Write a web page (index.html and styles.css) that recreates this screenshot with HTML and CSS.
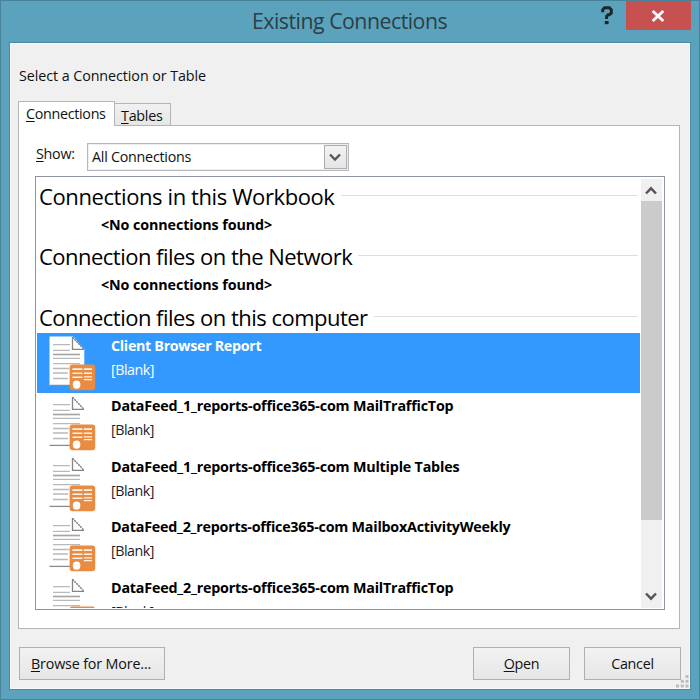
FILE: index.html
```
<!DOCTYPE html>
<html lang="en">
<head>
<meta charset="utf-8">
<title>Existing Connections</title>
<link rel="stylesheet" href="styles.css">
</head>
<body>
<svg class="defs" width="0" height="0" aria-hidden="true">
  <symbol id="feed" viewBox="0 0 48 56">
    <g fill="none" stroke="#b9b9b9" stroke-width="1.3">
      <path d="M4 8.7h17M4 14.3h17M4 22.3h27M4 27.7h27M4 32.5h16M4 37h15M4 42.5h15"/>
      <path d="M4 18.5h27" stroke="#a6a6a6" stroke-width="1.7"/>
      <path d="M.5 49.4h21" stroke="#8b8b8b"/>
    </g>
    <path d="M23.5 1.2V13.3H35" fill="#fff" stroke="#858585" stroke-width="1.3"/>
    <path d="M23.5 1.2L35 13.3" fill="none" stroke="#777" stroke-width="1.3" stroke-dasharray="2 .8"/>
    <rect x="20.6" y="28.6" width="25.6" height="25.6" rx="3" fill="#e98b41"/>
    <g fill="#fff3e7">
      <path d="M23.4 32.2h10v1.9h-10zM34.8 32.2h8.2v1.9h-8.2zM23.4 36.4h10v1.7h-10zM34.8 36.4h8.2v1.7h-8.2zM23.4 40.5h10v1.4h-10zM34.8 40.3h8.2v1.2h-8.2zM34.8 43h8.2v1.3h-8.2z"/>
      <ellipse cx="27.6" cy="48.6" rx="3.8" ry="4.2" fill="#fff"/>
    </g>
  </symbol>
</svg>
<div class="window">
  <header class="titlebar">
    <h1 class="title"><span>Existing Connections</span></h1>
    <svg class="help" width="12" height="19" viewBox="0 0 12 19"><path d="M1.7 6.2V3.8L3.6 1.8H8.4L10.3 3.8V7L8.3 8.8H7L5.6 10.3V13" fill="none" stroke="#242424" stroke-width="3"/><path d="M3.8 15h3.8v3.2H3.8z" fill="#242424"/></svg>
    <div class="close"><svg width="14" height="12" viewBox="0 0 14 12"><path d="M1.7 1L12.3 11M12.3 1L1.7 11" stroke="#fff" stroke-width="2.8"/></svg></div>
  </header>
  <main class="client">
    <div class="prompt">Select a Connection or Table</div>
    <div class="tabs">
      <div class="tab active"><span><u>C</u>onnections</span></div>
      <div class="tab"><span><u>T</u>ables</span></div>
    </div>
    <section class="panel">
      <div class="filter">
        <label><u>S</u>how:</label>
        <div class="select"><span>All Connections</span><div class="drop"><svg width="12" height="9" viewBox="0 0 12 9"><path d="M1 1.5L6 6.5L11 1.5" fill="none" stroke="#555" stroke-width="2.3"/></svg></div></div>
      </div>
      <div class="list">
        <div class="content">
          <div class="group first"><span>Connections in this Workbook</span></div>
          <div class="empty"><span>&lt;No connections found&gt;</span></div>
          <div class="group"><span>Connection files on the Network</span></div>
          <div class="empty"><span>&lt;No connections found&gt;</span></div>
          <div class="group"><span>Connection files on this computer</span></div>
          <div class="item selected"><svg class="icon" viewBox="0 0 48 56"><path d="M.5.5H24L35.3 13V49.5H.5z" fill="#fff"/><use href="#feed"/></svg><div><b>Client Browser Report</b><p>[Blank]</p></div></div>
          <div class="item"><svg class="icon"><use href="#feed"/></svg><div><b>DataFeed_1_reports-office365-com MailTrafficTop</b><p>[Blank]</p></div></div>
          <div class="item"><svg class="icon"><use href="#feed"/></svg><div><b>DataFeed_1_reports-office365-com Multiple Tables</b><p>[Blank]</p></div></div>
          <div class="item"><svg class="icon"><use href="#feed"/></svg><div><b class="long">DataFeed_2_reports-office365-com MailboxActivityWeekly</b><p>[Blank]</p></div></div>
          <div class="item"><svg class="icon"><use href="#feed"/></svg><div><b>DataFeed_2_reports-office365-com MailTrafficTop</b><p>[Blank]</p></div></div>
        </div>
        <div class="scrollbar">
          <div class="arrow"><svg width="12" height="9" viewBox="0 0 12 9"><path d="M1 7.5L6 2.3L11 7.5" fill="none" stroke="#555" stroke-width="2.4"/></svg></div>
          <div class="thumb"></div>
          <div class="arrow down"><svg width="12" height="9" viewBox="0 0 12 9"><path d="M1 1.5L6 6.7L11 1.5" fill="none" stroke="#555" stroke-width="2.4"/></svg></div>
        </div>
      </div>
    </section>
    <footer class="actions">
      <div class="button browse"><span><u>B</u>rowse for More...</span></div>
      <div class="button"><span><u>O</u>pen</span></div>
      <div class="button"><span>Cancel</span></div>
    </footer>
    <svg class="grip" width="13" height="13" viewBox="0 0 13 13"><path d="M9.5 0h3v3h-3zM9.5 4.7h3v3h-3zM9.5 9.4h3v3h-3zM4.8 4.7h3v3h-3zM4.8 9.4h3v3h-3zM0 9.4h3v3h-3z" fill="#bcbcbc"/></svg>
  </main>
</div>
</body>
</html>
```

FILE: styles.css
```
* { box-sizing: border-box; }
body { margin: 0; font: 14.3px/20px "Open Sans", "Noto Sans", sans-serif; letter-spacing: -0.25px; color: #111; }
h1, p { margin: 0; font-weight: 400; }
span, b, label { white-space: nowrap; }
u { text-decoration-thickness: 1px; text-underline-offset: 2px; }
.defs { position: absolute; }
.window { width: 700px; height: 700px; background: #5ba3bc; border: 1px solid #47849a; padding: 0 8px 9px 8px; display: flex; flex-direction: column; }
.titlebar { height: 41px; flex: none; display: flex; align-items: flex-start; }
.title { flex: 1; padding-left: 243px; font-size: 21.3px; line-height: 40px; letter-spacing: -0.5px; color: #2c3e45; }
.help { margin: 5px 13px 0 0; }
.close { width: 65px; height: 29px; background: #c75050; display: flex; align-items: center; justify-content: center; }
.close svg { margin-right: 2px; }
.client { flex: 1; min-height: 0; border: 1px solid #4b8ca4; background: #f0f0f0; box-shadow: inset 0 0 0 1px #fafafa; padding: 22px 10px 0 8px; display: flex; flex-direction: column; position: relative; }
.prompt { height: 36px; padding-left: 1px; line-height: 22px; letter-spacing: -0.07px; }
.tabs { height: 24px; display: flex; align-items: flex-end; }
.tab { width: 56px; height: 22px; border: 1px solid #b5b5b5; border-left: 0; border-bottom: 0; background: linear-gradient(#f1f1f1, #e6e6e6); padding: 2px 0 0 6px; }
.tab.active { width: 97px; height: 25px; margin-bottom: -1px; padding: 2px 0 0 7px; border-left: 1px solid #b5b5b5; background: #fff; position: relative; z-index: 1; }
.tab.active span { letter-spacing: -0.3px; }
.panel { height: 504px; border: 1px solid #b5b5b5; background: #fff; padding: 17px 14px 17px 16px; }
.filter { display: flex; height: 33px; padding-left: 1px; }
.filter label { width: 51px; line-height: 22px; }
.select { width: 262px; height: 28px; border: 1px solid #b4b7bd; box-shadow: inset 0 0 0 1px #eee; display: flex; align-items: center; justify-content: space-between; padding: 0 1px 0 4px; }
.drop { width: 23px; height: 24px; border: 1px solid #adadad; background: linear-gradient(#f3f3f3, #e5e5e5); display: flex; align-items: center; justify-content: center; }
.drop svg { margin-right: 1px; }
.list { height: 434px; border: 1px solid #8f96a2; display: flex; padding: 1px 2px 1px 1px; }
.content { width: 603px; flex: none; height: 430px; overflow: hidden; color: #000; }
.group { height: 35.5px; display: flex; align-items: center; font-size: 22px; line-height: 34px; letter-spacing: -0.52px; padding: 4px 2px 0 2px; }
.group.first { height: 33.5px; letter-spacing: -0.4px; padding-top: 3px; }
.group::after { content: ""; flex: 1; height: 1px; margin: 0 0 1px 6px; background: #dedede; }
.empty { height: 25px; padding-left: 64px; font-weight: 700; line-height: 26px; letter-spacing: -0.1px; }
.item { height: 60.5px; display: flex; padding-left: 12px; }
.icon { width: 48px; height: 56px; margin: 3.2px 14px 0 0; flex: none; }
.item b { display: block; line-height: 25px; letter-spacing: -0.19px; }
.item b.long { letter-spacing: -0.23px; }
.item p { line-height: 24px; letter-spacing: -0.5px; color: #1c1c28; }
.selected { background: #3399ff; color: #fff; }
.selected b { letter-spacing: -0.32px; }
.selected p { color: #fff; }
.scrollbar { width: 21px; margin: 1px 0 0 1px; background: #f0f0f0; display: flex; flex-direction: column; }
.arrow { height: 22px; display: flex; align-items: center; justify-content: center; }
.arrow svg { margin-right: 1px; }
.thumb { height: 319px; background: #cbcbcb; }
.down { margin-top: auto; height: 24px; }
.actions { display: flex; gap: 14px; padding: 18px 0 0 1px; margin-right: -1px; }
.button { width: 97px; height: 33px; border: 1px solid #b0b0b0; background: linear-gradient(#f2f2f2, #e6e6e6); display: flex; align-items: center; justify-content: center; }
.browse { width: 146px; margin-right: auto; }
.browse span { letter-spacing: -0.15px; margin-right: 2px; }
.grip { position: absolute; right: 1px; bottom: 1px; }
```
